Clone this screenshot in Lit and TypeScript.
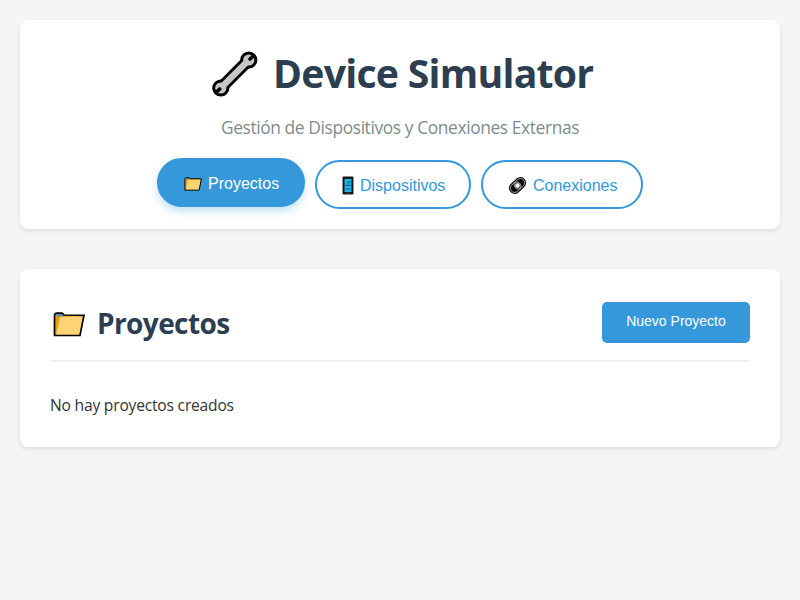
import { LitElement, html, css } from "lit";
import { customElement, state } from "lit/decorators.js";

const folder = (cls: string) => html`<svg class=${cls} viewBox="0 0 32 25" aria-hidden="true">
  <path d="M1.500 23.500V3Q2 1.200 4 1.200H9L11 3L31 3.300L27 23.500Z" fill="#e8a010" />
  <path d="M3.500 2H9L10.500 4.500H3.500Z" fill="#5a92b8" />
  <path d="M7 5L30 4L26.500 23H3.200Z" fill="#ffd373" />
  <path d="M1.500 23.500V3Q2 1.200 4 1.200H9L11 3L31 3.300L27 23.500Z"
    fill="none" stroke="#000" stroke-width="1.700" stroke-linejoin="miter" />
</svg>`;

const wrench = html`<svg class="wrench" viewBox="0 0 46 46" aria-hidden="true">
  <path d="M36.500 9.300L8.800 37" stroke="#000" stroke-width="12" />
  <circle cx="36.800" cy="9" r="8.600" />
  <circle cx="8.800" cy="37" r="8.600" />
  <g fill="#c6c7c7">
    <path d="M36.500 9.300L8.800 37" stroke="#c6c7c7" stroke-width="6.400" />
    <circle cx="36.800" cy="9" r="5.600" />
    <circle cx="8.800" cy="37" r="5.600" />
  </g>
  <path d="M41.500 4.800L38 8M4.200 41.300L7.700 38" stroke="#000" stroke-width="3.600" stroke-linecap="round" />
</svg>`;

const phone = html`<svg class="phone" viewBox="0 0 12 19" aria-hidden="true">
  <rect x=".5" y=".5" width="11" height="18" rx="1" fill="#17191b" />
  <rect x="2.500" y="3" width="7" height="13" fill="#1cb4e8" />
  <path d="M2.500 9.500H9.500M2.500 13H9.500M6 6V9.500M6 6H9.500" stroke="#12465c" stroke-width=".7" fill="none" />
  <path d="M4.500 17.200H7.500" stroke="#777" stroke-width=".5" />
</svg>`;

const link = html`<svg class="link" viewBox="0 0 20 20" aria-hidden="true">
  <g transform="rotate(-43 10 10)" fill="none">
    <rect x="-.2" y="4" width="20.400" height="12" rx="6" fill="#050505" />
    <rect x="1.300" y="5.500" width="12" height="9" rx="4.500" stroke="#c4c4c4" stroke-width=".8" />
    <rect x="6.700" y="5.500" width="12" height="9" rx="4.500" stroke="#c4c4c4" stroke-width=".8" />
    <circle cx="10" cy="10" r="2.500" fill="#fff" stroke="#999" />
  </g>
</svg>`;

@customElement("app-root")
export class AppRoot extends LitElement {
  @state() private tab = "proyectos";

  static styles = css`
    :host {
      display: block;
      box-sizing: border-box;
      min-height: 100vh;
      padding: 20px;
      background: #f5f5f5;
      color: #333;
      font-family: "Open Sans", "Noto Sans", sans-serif;
    }
    * { box-sizing: border-box; }
    h1, h2, p { margin: 0; white-space: nowrap; }
    svg { display: block; flex: none; overflow: visible; }
    .card {
      background: #fff;
      border-radius: 8px;
      box-shadow: 0 2px 4px rgba(0, 0, 0, 0.1);
    }
    .header {
      height: 209px;
      padding-top: 22px;
      margin-bottom: 40px;
    }
    .title {
      display: flex;
      align-items: center;
      height: 64px;
      padding-left: 192px;
      color: #2c3e50;
      font-size: 39.2px;
      font-weight: 700;
    }
    .wrench { width: 46px; height: 46px; margin-right: 15px; }
    .title-text { letter-spacing: -0.75px; padding-bottom: 3px; }
    .subtitle {
      height: 28px;
      margin-top: 7px;
      line-height: 28px;
      text-align: center;
      color: #7f8c8d;
      font-size: 17.4px;
      letter-spacing: -0.4px;
    }
    .nav {
      display: flex;
      justify-content: center;
      gap: 10px;
      margin-top: 19px;
    }
    button { font-family: "Liberation Sans", Arial, sans-serif; white-space: nowrap; }
    .tab {
      display: flex;
      align-items: center;
      height: 49px;
      padding: 2px 0 0 25px;
      border: 2px solid #3498db;
      border-radius: 25px;
      background: #fff;
      color: #3498db;
      font-size: 16px;
    }
    .tab.active {
      background: #3498db;
      color: #fff;
      transform: translateY(-2px);
      box-shadow: 0 4px 8px rgba(52, 152, 219, 0.3);
    }
    .proyectos { width: 148px; }
    .dispositivos { width: 156px; }
    .conexiones { width: 162px; }
    .folder-sm { width: 18px; height: 14px; margin-right: 6px; }
    .phone { width: 12px; height: 19px; margin-right: 6px; }
    .link { width: 19px; height: 19px; margin-right: 6px; }
    .section { height: 178px; padding: 30px; }
    .section-head {
      display: flex;
      justify-content: space-between;
      height: 63px;
      border-bottom: 2px solid #ecf0f1;
    }
    .section-title {
      display: flex;
      align-items: center;
      height: 50px;
      color: #2c3e50;
      font-size: 28px;
      font-weight: 700;
    }
    .folder-lg { width: 32px; height: 25px; margin: 0 12px 0 3px; }
    .section-text { letter-spacing: -0.6px; padding-bottom: 2px; }
    .new {
      width: 148px;
      height: 41px;
      margin-top: 3px;
      padding: 0 0 3px;
      border: 0;
      border-radius: 5px;
      background: #3498db;
      color: #fff;
      font-size: 14px;
    }
    .empty {
      margin-top: 30px;
      line-height: 26px;
      font-size: 15.6px;
      letter-spacing: -0.2px;
    }
  `;

  private tabs = [
    { id: "proyectos", label: "Proyectos", icon: folder("folder-sm") },
    { id: "dispositivos", label: "Dispositivos", icon: phone },
    { id: "conexiones", label: "Conexiones", icon: link },
  ];

  render() {
    return html`
      <header class="card header">
        <h1 class="title">${wrench}<span class="title-text">Device Simulator</span></h1>
        <p class="subtitle">Gestión de Dispositivos y Conexiones Externas</p>
        <nav class="nav">
          ${this.tabs.map(
            (t) => html`<button
              class="tab ${t.id} ${this.tab === t.id ? "active" : ""}"
              @click=${() => (this.tab = t.id)}
            >${t.icon}<span>${t.label}</span></button>`
          )}
        </nav>
      </header>
      <main class="card section">
        <div class="section-head">
          <h2 class="section-title">${folder("folder-lg")}<span class="section-text">Proyectos</span></h2>
          <button class="new">Nuevo Proyecto</button>
        </div>
        <p class="empty">No hay proyectos creados</p>
      </main>
    `;
  }
}
